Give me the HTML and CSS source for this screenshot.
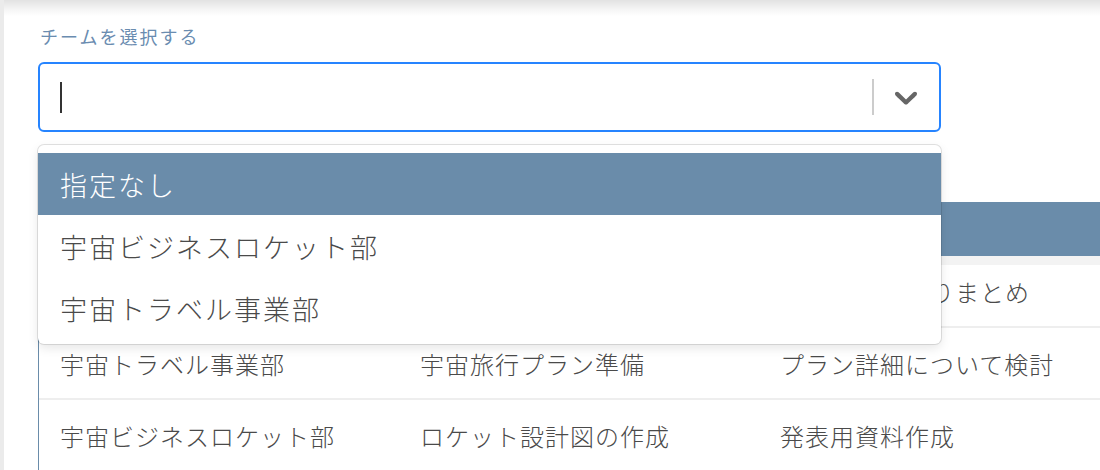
FILE: index.html
```html
<!DOCTYPE html>
<html lang="ja">
<head>
<meta charset="utf-8">
<title>チーム選択</title>
<link rel="stylesheet" href="styles.css">
</head>
<body>
<div class="page">
  <div class="field">
    <label class="label">チームを選択する</label>
    <div class="select">
      <div class="control">
        <div class="value"><span class="caret"></span></div>
        <div class="indicators">
          <span class="sep"></span>
          <svg class="chevron" viewBox="0 0 20 20" width="38" height="38" aria-hidden="true"><path d="M4.516 7.548c0.436-0.446 1.043-0.481 1.576 0l3.908 3.747 3.908-3.747c0.533-0.481 1.141-0.446 1.574 0 0.436 0.445 0.408 1.197 0 1.615-0.406 0.418-4.695 4.502-4.695 4.502-0.217 0.223-0.502 0.335-0.787 0.335s-0.57-0.112-0.789-0.335c0 0-4.287-4.084-4.695-4.502s-0.436-1.170 0-1.615z"/></svg>
        </div>
      </div>
      <div class="menu">
        <div class="option selected">指定なし</div>
        <div class="option">宇宙ビジネスロケット部</div>
        <div class="option">宇宙トラベル事業部</div>
      </div>
    </div>
  </div>
  <table class="tasks">
    <thead>
      <tr><th>チーム</th><th>プロジェクト</th><th>タスク</th></tr>
    </thead>
    <tbody>
      <tr class="first"><td>宇宙ビジネスロケット部</td><td>市場調査の実施</td><td>調査結果の取りまとめ</td></tr>
      <tr><td>宇宙トラベル事業部</td><td>宇宙旅行プラン準備</td><td>プラン詳細について検討</td></tr>
      <tr><td>宇宙ビジネスロケット部</td><td>ロケット設計図の作成</td><td>発表用資料作成</td></tr>
    </tbody>
  </table>
</div>
</body>
</html>
```

FILE: styles.css
```css
html, body {
  margin: 0;
  padding: 0;
  height: 100%;
  overflow: hidden;
}
body {
  background: #ebebeb;
  font-family: "Noto Sans CJK JP", "Noto Sans", sans-serif;
  font-weight: 300;
  color: #555;
}
.page {
  margin-left: 4px;
  height: 100%;
  padding: 24px 0 0 34px;
  box-sizing: border-box;
  background: linear-gradient(to bottom, #e2e2e2 0px, #f4f4f4 9px, #ffffff 16px);
}
.field {
  display: flex;
  flex-direction: column;
  width: 903px;
}
.label {
  font-size: 18px;
  font-weight: 400;
  line-height: 24px;
  letter-spacing: 2px;
  color: #6a8cb0;
  margin: 0 0 14px 2px;
}
.select {
  position: relative;
}
.control {
  display: flex;
  align-items: center;
  height: 70px;
  box-sizing: border-box;
  border: 2px solid #2684ff;
  border-radius: 6px;
  background: #fff;
}
.value {
  flex: 1;
  display: flex;
  align-items: center;
  padding-left: 20px;
}
.caret {
  display: block;
  width: 2px;
  height: 31px;
  background: #333;
}
.indicators {
  display: flex;
  align-items: center;
  padding-right: 14px;
}
.sep {
  display: block;
  width: 2px;
  height: 36px;
  background: #cccccc;
  margin-right: 13px;
}
.chevron {
  display: block;
  fill: #666;
}
.menu {
  position: absolute;
  z-index: 2;
  left: 0;
  right: 0;
  top: calc(100% + 13px);
  background: #fff;
  border-radius: 6px;
  padding: 8px 0 5px;
  box-shadow: 0 0 0 1px rgba(0, 0, 0, 0.11), 0 4px 11px rgba(0, 0, 0, 0.1);
}
.option {
  height: 62px;
  display: flex;
  align-items: center;
  padding-left: 22px;
  font-size: 27px;
  letter-spacing: 2px;
  color: #4a4a4a;
}
.option.selected {
  background: #6a8caa;
  color: #fff;
}
.tasks {
  margin-top: 70px;
  border-collapse: separate;
  border-spacing: 0;
  border-left: 1px solid #6a8caa;
  table-layout: fixed;
  width: 1080px;
}
.tasks th {
  width: 360px;
  height: 54px;
  padding: 0 21px;
  box-sizing: border-box;
  background: #6a8caa;
  color: #fff;
  text-align: left;
  font-size: 24px;
  font-weight: normal;
}
.tasks td {
  height: 70px;
  padding: 0 21px;
  box-sizing: content-box;
  border-bottom: 2px solid #eeeeee;
  font-size: 24px;
  letter-spacing: 1px;
  white-space: nowrap;
  color: #4a4a4a;
  vertical-align: middle;
}
.tasks tr.first td {
  background: linear-gradient(to bottom, #f3f3f3 0px, #f3f3f3 9px, #ffffff 9px);
}
```
